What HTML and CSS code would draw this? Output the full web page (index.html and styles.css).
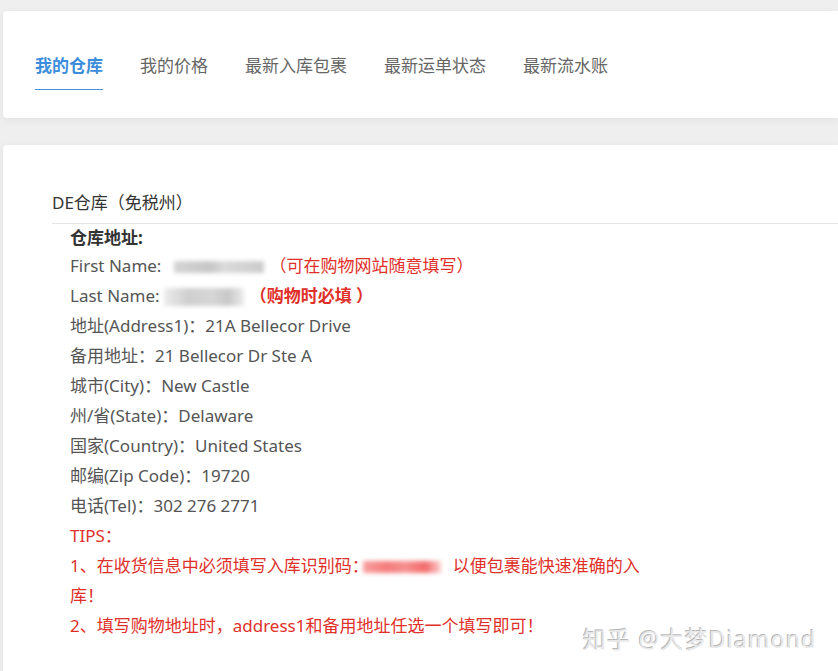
FILE: index.html
```html
<!DOCTYPE html>
<html lang="zh-CN">
  <head>
    <meta charset="UTF-8" />
    <meta name="viewport" content="width=device-width, initial-scale=1.0" />
    <title>我的仓库</title>
    <link rel="stylesheet" href="styles.css">
  </head>
  <body>
    <!-- Tabs -->
    <div class="card tabs-card">
      <ul class="tabs">
        <li class="tab active">我的仓库</li>
        <li class="tab">我的价格</li>
        <li class="tab">最新入库包裹</li>
        <li class="tab">最新运单状态</li>
        <li class="tab">最新流水账</li>
      </ul>
    </div>

    <!-- Warehouse -->
    <div class="card main-card">
      <div class="wh-title">DE仓库（免税州）</div>
      <div class="wh-body">
        <div class="line strong">仓库地址:</div>
        <div class="line">First Name:<span class="blur blur-gray blur-first"></span><span class="red">（可在购物网站随意填写）</span></div>
        <div class="line">Last Name:<span class="blur blur-gray blur-last"></span><span class="red bold">（购物时必填 ）</span></div>
        <div class="line">地址(Address1)：21A Bellecor Drive</div>
        <div class="line">备用地址：21 Bellecor Dr Ste A</div>
        <div class="line">城市(City)：New Castle</div>
        <div class="line">州/省(State)：Delaware</div>
        <div class="line">国家(Country)：United States</div>
        <div class="line">邮编(Zip Code)：19720</div>
        <div class="line">电话(Tel)：302 276 2771</div>
        <div class="tips">
          <div class="line">TIPS：</div>
          <div class="line">1、在收货信息中必须填写入库识别码：<span class="blur blur-red"></span>以便包裹能快速准确的入库！</div>
          <div class="line">2、填写购物地址时，address1和备用地址任选一个填写即可！</div>
        </div>
      </div>
    </div>

    <div class="watermark">知乎 @大梦Diamond</div>
  </body>
</html>
```

FILE: styles.css
```css
body {
  font-family: "Noto Sans", "Noto Sans CJK SC", sans-serif;
  margin: 0;
  padding: 11px 0 0 3px;
  background-color: #efefef;
  color: #555;
  overflow: hidden;
  height: 660px;
}
.card {
  background-color: #fff;
  border-radius: 4px 0 0 4px;
  box-shadow: 0 2px 8px rgba(0, 0, 0, 0.06);
}
.tabs-card {
  height: 107px;
  box-sizing: border-box;
  padding: 42px 0 0 32px;
}
.tabs {
  list-style: none;
  margin: 0;
  padding: 0;
  display: flex;
  gap: 37px;
}
.tab {
  font-size: 17px;
  line-height: 26px;
  color: #666;
  padding-bottom: 10px;
  border-bottom: 1px solid transparent;
}
.tab.active {
  color: #3c8ddb;
  font-weight: bold;
  border-bottom-color: #4a90d9;
}
.main-card {
  margin-top: 27px;
  height: 540px;
  padding: 45px 0 0 49px;
  box-sizing: border-box;
}
.wh-title {
  font-size: 17px;
  line-height: 26px;
  color: #333;
  padding-bottom: 7px;
  border-bottom: 1px solid #e4e4e4;
}
.wh-body {
  padding-left: 18px;
}
.line {
  font-size: 17px;
  line-height: 30px;
  white-space: nowrap;
}
.strong {
  font-weight: bold;
  color: #333;
  line-height: 27px;
}
.red {
  color: #e0302a;
}
.bold {
  font-weight: bold;
}
.tips .line {
  color: #e0302a;
  white-space: normal;
  width: 580px;
}
.blur {
  display: inline-block;
  vertical-align: middle;
  filter: blur(2px);
}
.blur-gray {
  background: linear-gradient(90deg, #d4d4d4, #c6c6c6 40%, #dadada 55%, #cbcbcb);
  height: 12px;
}
.blur-first {
  width: 90px;
  margin: 0 5px 0 13px;
}
.blur-last {
  width: 80px;
  height: 18px;
  margin: 0 6px 0 4px;
  background: linear-gradient(90deg, #ececec, #cfcfcf 30%, #d6d6d6 60%, #c8c8c8 80%, #ececec);
}
.blur-red {
  width: 78px;
  height: 12px;
  margin: 0 12px 0 -6px;
  background: linear-gradient(90deg, #f8a0a0, #f47c7c 30%, #f59090 55%, #f26a6a 80%, #fbd0d0);
}
.watermark {
  position: absolute;
  left: 583px;
  top: 621px;
  font-size: 23px;
  color: #e8e8e8;
  text-shadow: -1px -1px 0 #b8b8b8, 1px 1px 0 #ffffff;
  letter-spacing: 1.2px;
}
```
